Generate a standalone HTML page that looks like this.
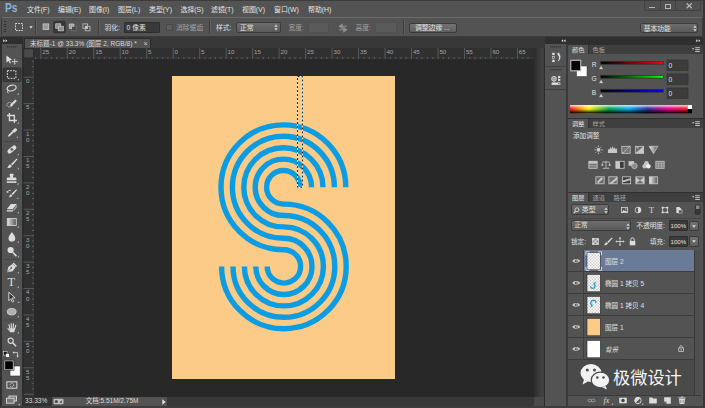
<!DOCTYPE html>
<html lang="zh-CN">
<head>
<meta charset="utf-8">
<title>Photoshop</title>
<style>
*{box-sizing:border-box;margin:0;padding:0}
html,body{width:705px;height:408px;overflow:hidden;background:#535353}
body{font-family:"Liberation Sans","Noto Sans CJK SC",sans-serif;font-size:6.6px;color:#e0e0e0;position:relative;line-height:1}
.a{position:absolute}
.t{position:absolute;white-space:nowrap;line-height:10px;height:10px}
#menubar{left:0;top:0;width:705px;height:17px;background:#535353}
#optbar{left:1px;top:17px;width:702px;height:20px;background:#535353;border:1px solid #3b3b3b;border-top-color:#6a6a6a;border-radius:2px}
#tabbar{left:23px;top:37px;width:522px;height:11px;background:#383838}
#canvas{left:34px;top:59px;width:500px;height:338px;background:#282828}
#hruler{left:23px;top:48px;width:511px;height:11px;background:#424242}
#vruler{left:23px;top:59px;width:11px;height:338px;background:#424242}
#toolbar{left:0;top:37px;width:23.5px;height:371px;background:#2e2e2e}
#toolbody{left:1.5px;top:43.5px;width:20.5px;height:362.5px;background:#535353}
#status{left:23px;top:396.5px;width:511px;height:9.5px;background:#383838}
#vscroll{left:534px;top:48px;width:11px;height:349px;background:linear-gradient(90deg,#2c2c2c,#454545 85%,#2c2c2c 90%)}
#dockhead{left:545px;top:37px;width:160px;height:7px;background:#2f2f2f}
#iconcol{left:545px;top:44px;width:22.5px;height:362px;background:#535353;border-right:2px solid #3a3a3a}
#panels{left:567.5px;top:44px;width:135.2px;height:362px;background:#535353}
#rightedge{left:702.7px;top:0;width:2.3px;height:408px;background:#363636}
#bottomstrip{left:0;top:405.8px;width:705px;height:2.2px;background:#3c3c3c}

#pslogo{left:5.3px;top:1.3px;font-size:13.4px;font-weight:bold;color:#86b4e4;line-height:14px;height:14px;font-family:"Liberation Sans",sans-serif;transform:scaleX(0.76);transform-origin:0 0}
.mi{top:4.6px;font-size:6.9px;color:#e4e4e4}
#optitems .t{font-size:6.8px;margin-top:0.8px}
#winctl{left:643.5px;top:0;width:57.5px;height:10.500px;background:#505050;border:1px solid #424242;border-top:0;border-radius:0 0 2px 2px}
.wc{top:0;height:10px;border-right:1px solid #3a3a3a}
.wc:last-child{border-right:0}
.grip{width:2px;height:12px;background:repeating-linear-gradient(180deg,#2f2f2f 0,#2f2f2f 1px,transparent 1px,transparent 2.5px)}
.vsep{top:20px;width:1px;height:14px;background:#3f3f3f;box-shadow:1px 0 0 #5e5e5e}
.inp{background:#3a3a3a;border:1px solid #2e2e2e;border-radius:1px}
.inpd{background:#5a5a5a;border:1px solid #505050;border-radius:1px}
.dd{background:linear-gradient(180deg,#6c6c6c,#5a5a5a);border:1px solid #3c3c3c;border-radius:2px}
.btn{background:linear-gradient(180deg,#737373,#5e5e5e);border:1px solid #3a3a3a;border-radius:2px}
.dis{color:#a2a2a2}

#doctab{left:24px;top:38px;width:126.5px;height:10.5px;background:#535353;border:1px solid #2c2c2c;border-bottom:0;border-radius:1px 1px 0 0}

.ptabbar{left:567.500px;width:135.200px;height:10px;background:#3f3f3f;border-top:1px solid #2f2f2f}
.ptab{height:10px;background:#535353;border-right:1px solid #333;border-top:1px solid #333}
.ptd{color:#a4a4a4}
.lrow{left:568px;width:126px;height:22px;background:#535353;border-bottom:1px solid #3c3c3c}
.lsel{background:#6a7b97}
.leye{left:568px;width:16px;height:22px;background:#535353;border-right:1px solid #3e3e3e;border-bottom:1px solid #3c3c3c}
#wm{left:613px;top:365px;font-size:17.200px;line-height:24px;height:24px;color:#f4f4f4;font-family:"Noto Sans CJK SC",sans-serif}
</style>
</head>
<body>
<div class="a" id="menubar">
<div class="t" id="pslogo">Ps</div>
<div class="t mi" style="left:27px">文件(F)</div>
<div class="t mi" style="left:58px">编辑(E)</div>
<div class="t mi" style="left:89px">图像(I)</div>
<div class="t mi" style="left:118px">图层(L)</div>
<div class="t mi" style="left:149px">类型(Y)</div>
<div class="t mi" style="left:180.5px">选择(S)</div>
<div class="t mi" style="left:211px">滤镜(T)</div>
<div class="t mi" style="left:242px">视图(V)</div>
<div class="t mi" style="left:274px">窗口(W)</div>
<div class="t mi" style="left:308px">帮助(H)</div>
<div class="a" id="winctl"><i class="a" style="left:15px;top:0;width:1px;height:10px;background:#444"></i><i class="a" style="left:30.500px;top:0;width:1px;height:10px;background:#444"></i><i class="a" style="left:4.500px;top:6.500px;width:5.800px;height:1.700px;background:#b4b4b4"></i><i class="a" style="left:20.500px;top:4.200px;width:5.800px;height:4.400px;border:1px solid #b4b4b4;border-top-width:1.500px"></i><svg class="a" style="left:41px;top:3.200px" width="6.500" height="5.500" viewBox="0 0 6.500 5.500"><path d="M0.600 0.300L5.900 5.200M5.900 0.300L0.600 5.200" stroke="#b8b8b8" stroke-width="1.300" fill="none"/></svg></div>
</div>
<div class="a" id="optbar"></div>
<div class="a" id="optitems">
<i class="a grip" style="left:4px;top:21px"></i>
<svg class="a" style="left:14px;top:22px" width="20" height="10" viewBox="0 0 20 10"><rect x="1.5" y="1.5" width="7" height="7" fill="none" stroke="#dcdcdc" stroke-width="1" stroke-dasharray="1.6 1.1"/><path d="M15.300 4.300h3.400l-1.700 2.200z" fill="#e4e4e4"/></svg>
<i class="a vsep" style="left:35.200px"></i>
<svg class="a" style="left:40px;top:20px" width="54" height="14" viewBox="0 0 54 14">
<rect x="3.1" y="3.9" width="5.6" height="5.6" fill="#9a9a9a" stroke="#cacaca" stroke-width="0.8"/>
<rect x="13.5" y="1.3" width="11.8" height="11.6" rx="1.5" fill="#363636" stroke="#2e2e2e" stroke-width="0.6"/>
<rect x="15.700" y="3.800" width="5" height="4.500" fill="#8d8d8d" stroke="#c4c4c4" stroke-width="0.800"/><rect x="18.300" y="6.300" width="5" height="4.500" fill="#8d8d8d" stroke="#c4c4c4" stroke-width="0.800"/>
<rect x="31.500" y="6.200" width="4.800" height="4.600" fill="#484848" stroke="#707070" stroke-width="0.800"/><path d="M29.300 4h4.600v2.200h-2.400v2.200h-2.200z" fill="#a0a0a0" stroke="#cccccc" stroke-width="0.800"/>
<rect x="42.900" y="3.900" width="4.700" height="4.500" fill="none" stroke="#bdbdbd" stroke-width="0.800"/><rect x="45.300" y="6.300" width="4.700" height="4.500" fill="none" stroke="#bdbdbd" stroke-width="0.800"/><rect x="45.300" y="6.300" width="2.300" height="2.100" fill="#d0d0d0"/>
</svg>
<i class="a vsep" style="left:97.700px"></i>
<div class="t" style="left:104.5px;top:22px">羽化:</div>
<div class="a inp" style="left:123.5px;top:22px;width:36px;height:11px"></div>
<div class="t" style="left:126.5px;top:22.5px">0 像素</div>
<i class="a" style="left:165.5px;top:23.5px;width:7px;height:7px;background:#5c5c5c;border:1px solid #484848;border-radius:1px"></i>
<div class="t dis" style="left:176px;top:22px">消除锯齿</div>
<i class="a vsep" style="left:209px"></i>
<div class="t" style="left:216px;top:22px">样式:</div>
<div class="a dd" style="left:236px;top:22px;width:44.5px;height:11px"></div>
<div class="t" style="left:240px;top:22.5px">正常</div>
<svg class="a" style="left:274px;top:24px" width="4" height="7" viewBox="0 0 4 7"><path d="M0.3 2.7L2 0.5 3.7 2.7zM0.3 4.3L2 6.5 3.7 4.3z" fill="#d8d8d8"/></svg>
<div class="t dis" style="left:288.5px;top:22px">宽度:</div>
<div class="a inpd" style="left:307.5px;top:22px;width:21.5px;height:11px"></div>
<svg class="a" style="left:337.500px;top:22.500px" width="10" height="10" viewBox="0 0 10 10"><path d="M1 6.800h5.500M5.800 4.800L8.600 6.800 5.800 8.800zM9 3.200h-5.500M4.200 1.200L1.400 3.200 4.200 5.200z" stroke="#8e8e8e" stroke-width="1.100" fill="#8e8e8e"/></svg>
<div class="t dis" style="left:355.5px;top:22px">高度:</div>
<div class="a inpd" style="left:375px;top:22px;width:22px;height:11px"></div>
<i class="a vsep" style="left:402.5px"></i>
<div class="a btn" style="left:409px;top:22.5px;width:47.5px;height:10px"></div>
<div class="t" style="left:415px;top:22.5px">调整边缘 ...</div>
<div class="a dd" style="left:639.800px;top:22.700px;width:58.500px;height:10.500px"></div>
<div class="t" style="left:643.700px;top:23.200px">基本功能</div>
<svg class="a" style="left:692.500px;top:24.700px" width="4" height="7" viewBox="0 0 4 7"><path d="M0.3 2.7L2 0.5 3.7 2.7zM0.3 4.3L2 6.5 3.7 4.3z" fill="#d8d8d8"/></svg>
</div>
<div class="a" id="toolbar"></div>
<div class="a" id="toolbody"></div>
<svg class="a" id="tools" style="left:0;top:37px" width="23" height="371" viewBox="0 37 23 371">
<rect x="0" y="37" width="23" height="7" fill="#2e2e2e"/>
<path d="M3.2 39.3l1.8 1.5-1.8 1.5zM5.6 39.3l1.8 1.5-1.8 1.5z" fill="#e0e0e0"/>
<path d="M7 46.800h10" stroke="#383838" stroke-width="1.500" stroke-dasharray="1.300 0.700"/>
<g transform="translate(11.9 60)"><path d="M-5.5 -4.5L0.2 -0.2-2.2 0.3-0.9 3-2 3.5-3.3 0.9-5.5 2.6z" fill="#dcdcdc"/><path d="M2.8 -0.600v4.400M0.600 1.600h4.400" stroke="#dcdcdc" stroke-width="0.800"/><path d="M2.800 -1.600l1 1.200h-2zM2.800 4.800l1-1.200h-2zM-0.400 1.600l1.200-1v2zM6 1.600l-1.200-1v2z" fill="#dcdcdc"/></g>
<rect x="3" y="68" width="18" height="13.5" rx="1.5" fill="#3a3a3a" stroke="#2c2c2c" stroke-width="0.8"/>
<g transform="translate(11.9 74.5)"><rect x="-4.5" y="-3.8" width="8.5" height="7.6" fill="none" stroke="#dcdcdc" stroke-width="1" stroke-dasharray="1.7 1.1"/><path d="M7 4v1.700h-1.700z" fill="#c0c0c0"/></g>
<g transform="translate(11.9 89)"><ellipse cx="0" cy="-1" rx="4.6" ry="2.8" fill="none" stroke="#dcdcdc" stroke-width="1.2" transform="rotate(-15)"/><path d="M-3 1.2c-1.5 0.5-1.8 2 -0.6 3.2" fill="none" stroke="#dcdcdc" stroke-width="1"/><path d="M7 4v1.700h-1.700z" fill="#c0c0c0"/></g>
<g transform="translate(11.9 103.5)"><ellipse cx="-2.2" cy="1.2" rx="2.8" ry="2.2" fill="none" stroke="#dcdcdc" stroke-width="0.9" stroke-dasharray="1.2 0.8"/><path d="M-2 1.5L3.5 -4 5 -2.5-0.5 3z" fill="#dcdcdc"/><path d="M7 4v1.700h-1.700z" fill="#c0c0c0"/></g>
<g transform="translate(11.9 118)"><path d="M-2.5 -5v7.5h7.5M-5 -2.5h7.5v7.5" fill="none" stroke="#dcdcdc" stroke-width="1.3"/><path d="M7 4v1.700h-1.700z" fill="#c0c0c0"/></g>
<g transform="translate(11.9 132.9)"><g transform="scale(0.86)"><path d="M-4.5 4.5l0.5-2L1 -2.5 2.5 -1-2.5 4z" fill="#dcdcdc"/><path d="M0.8 -3.3L3.3 -0.8M1.5 -2.5l2-2c1-0.8 2.3 0.4 1.5 1.5l-2 2" stroke="#dcdcdc" stroke-width="1.3" fill="#dcdcdc"/><path d="M7 4v1.700h-1.700z" fill="#c0c0c0"/></g></g>
<rect x="4" y="141.2" width="16" height="0.8" fill="#444"/>
<g transform="translate(11.9 149.5)"><rect x="-5.2" y="-2.2" width="10.4" height="4.4" rx="2.2" fill="#dcdcdc" transform="rotate(-40)"/><rect x="-1.3" y="-1.3" width="2.6" height="2.6" fill="#666" transform="rotate(-40)"/><path d="M7 4v1.700h-1.700z" fill="#c0c0c0"/></g>
<g transform="translate(11.9 163.5)"><path d="M4.8 -5L5.6 -4.2 0.5 1.8-0.9 0.4z" fill="#dcdcdc"/><path d="M-1.5 1L-0.1 2.4c-0.8 1.8-2.6 2.4-4.6 2 1.2-0.7 1.3-3.5 3.2-3.4z" fill="#dcdcdc"/><path d="M7 4v1.700h-1.700z" fill="#c0c0c0"/></g>
<g transform="translate(11.6 178.8)"><path d="M-1.2 -5h2.4c0.8 0 1 0.8 0.6 1.6l-0.6 2.2h2.6c0.7 0 1 0.4 1 1v1.6h-9.6v-1.6c0-0.6 0.3-1 1-1h2.6l-0.6-2.2c-0.4-0.8-0.2-1.6 0.6-1.6z" fill="#dcdcdc"/><rect x="-4.8" y="2.5" width="9.6" height="1.6" fill="#dcdcdc"/><path d="M7 4v1.700h-1.700z" fill="#c0c0c0"/></g>
<g transform="translate(11.9 193.8) scale(0.92)"><path d="M4.8 -5L5.6 -4.2 1 1.2-0.3 -0.1z" fill="#dcdcdc"/><path d="M-1 0.5L0.4 1.9c-0.6 1.4-2.2 2-3.8 1.7 1-0.6 1-2.9 2.4-3.1z" fill="#dcdcdc"/><path d="M-1 -3.8a3.6 3.6 0 0 0 -4 2" fill="none" stroke="#dcdcdc" stroke-width="1"/><path d="M-5.8 -3.2l0.4 2.4 2.1-1z" fill="#dcdcdc"/><path d="M7 4v1.700h-1.700z" fill="#c0c0c0"/></g>
<g transform="translate(11.9 207.5)"><path d="M-5 1.5L-1 -3.5h6L1 1.5z" fill="#dcdcdc"/><path d="M-5 2.2h6v2h-6z" fill="#bdbdbd"/><path d="M1.6 1.9L5.2 -2.8v2L1.6 3.9z" fill="#a8a8a8"/><path d="M7 4v1.700h-1.700z" fill="#c0c0c0"/></g>
<defs><linearGradient id="gr1" x1="0" x2="1"><stop offset="0" stop-color="#e4e4e4"/><stop offset="1" stop-color="#555"/></linearGradient></defs>
<g transform="translate(11.9 222)"><rect x="-4.600" y="-3.500" width="9" height="7" fill="url(#gr1)" stroke="#d0d0d0" stroke-width="0.900"/><path d="M7 4v1.700h-1.700z" fill="#c0c0c0"/></g>
<g transform="translate(11.9 237)"><path d="M0 -5c1.2 2.2 3.4 4 3.4 6.2a3.4 3.4 0 0 1-6.8 0c0-2.2 2.2-4 3.4-6.2z" fill="#dcdcdc"/><path d="M7 4v1.700h-1.700z" fill="#c0c0c0"/></g>
<g transform="translate(11.9 251.5)"><circle cx="-1.3" cy="-1.5" r="3.1" fill="#dcdcdc"/><path d="M0.8 0.8L4.5 4.6" stroke="#dcdcdc" stroke-width="1.6"/><path d="M7 4v1.700h-1.700z" fill="#c0c0c0"/></g>
<rect x="4" y="259" width="15" height="0.8" fill="#444"/>
<g transform="translate(11.9 267.5)"><path d="M-4.8 4.8L-3.6 -0.6 0.6 -3.6 3.8 -0.4 0.8 3.8z" fill="#dcdcdc"/><path d="M1.2 -4.4L4.6 -1" stroke="#dcdcdc" stroke-width="1.5"/><circle cx="-0.6" cy="0.4" r="0.9" fill="#555"/><path d="M-4.6 4.6L-0.9 0.8" stroke="#555" stroke-width="0.7"/><path d="M7 4v1.700h-1.700z" fill="#c0c0c0"/></g>
<text x="11.3" y="286.3" font-family="Liberation Serif, serif" font-size="12.5" fill="#dcdcdc" text-anchor="middle">T</text>
<g transform="translate(11.9 282)"><path d="M7 4v1.700h-1.700z" fill="#c0c0c0"/></g>
<g transform="translate(12.3 297.2)"><path d="M-3.5 -5L2.8 0.6-0.2 0.9 1.4 4.2 0 4.9-1.6 1.6-3.5 3.6z" fill="#3a3a3a" stroke="#dcdcdc" stroke-width="0.9"/><path d="M7 4v1.700h-1.700z" fill="#c0c0c0"/></g>
<g transform="translate(11.9 311.5)"><ellipse cx="-0.200" cy="0.200" rx="4.400" ry="3.200" fill="#b0b0b0" stroke="#d4d4d4" stroke-width="0.900"/><path d="M7 4v1.700h-1.700z" fill="#c0c0c0"/></g>
<rect x="4" y="319.5" width="15" height="0.8" fill="#444"/>
<g transform="translate(11.9 327.7)"><path d="M-1.800 4.600c-0.800-1.300-2.200-2.500-2.900-3.700 0.500-0.800 1.400-0.400 2.100 0.500z" fill="#d8d8d8"/><path d="M-2 4.600h4.200c0.600-1 0.900-1.800 0.900-3V0.500h-5.300v1.500z" fill="#d8d8d8"/><path d="M-2.100 1L-2.900-3M-0.500 0.500L-0.700-4.200M1.200 0.500L1.600-3.900M2.800 1.200L3.800-2.400" stroke="#d8d8d8" stroke-width="1.150" stroke-linecap="round" fill="none"/><path d="M7 4v1.700h-1.700z" fill="#c0c0c0"/></g>
<g transform="translate(11.9 342)"><circle cx="-1.200" cy="-1.300" r="2.600" fill="none" stroke="#d8d8d8" stroke-width="1.200"/><path d="M0.800 0.800L4.200 4.300" stroke="#d8d8d8" stroke-width="1.600"/></g>
<rect x="3.5" y="351.5" width="3.6" height="3.6" fill="#111" stroke="#dcdcdc" stroke-width="0.6"/><rect x="5.6" y="353.6" width="3.6" height="3.6" fill="#fff" stroke="#222" stroke-width="0.4"/>
<path d="M14 352.6h3.6v3.6" fill="none" stroke="#dcdcdc" stroke-width="0.8"/><path d="M14.2 351.3l-1.6 1.3 1.6 1.3zM16.3 355.8l1.3 1.6 1.3-1.6z" fill="#dcdcdc"/>
<rect x="10" y="366" width="10.200" height="10" fill="#fff" stroke="#2a2a2a" stroke-width="0.600"/><rect x="4.700" y="360.800" width="8.600" height="9" fill="#000" stroke="#c4c4c4" stroke-width="0.900"/><rect x="3.900" y="360" width="10.200" height="10.600" fill="none" stroke="#2a2a2a" stroke-width="0.500"/>
<g transform="translate(11.9 385)"><rect x="-5" y="-3.2" width="10" height="6.4" fill="none" stroke="#dcdcdc" stroke-width="1"/><circle cx="0" cy="0" r="1.9" fill="none" stroke="#dcdcdc" stroke-width="1" stroke-dasharray="1 0.7"/></g>
<g transform="translate(11.5 399.8)"><rect x="-2.5" y="-3.8" width="7.5" height="5" fill="#777" stroke="#dcdcdc" stroke-width="0.9"/><rect x="-5" y="-1.6" width="7.5" height="5" fill="#777" stroke="#dcdcdc" stroke-width="0.9"/><path d="M8.3 3.6v1.8h-1.8z" fill="#c8c8c8"/></g>
</svg>
<div class="a" id="tabbar"></div>
<div class="a" id="doctab"></div>
<div class="t" style="left:30px;top:38.700px;font-size:6.55px;color:#dadada">未标题-1 @ 33.3% (图层 2, RGB/8) *</div>
<div class="t" style="left:143.500px;top:38.500px;font-size:7px;color:#d0d0d0">×</div>
<div class="a" id="canvas"></div>
<svg class="a" id="doc" style="left:0;top:0" width="705" height="408" viewBox="0 0 705 408">
<rect x="172" y="76" width="223" height="303" fill="#fccb87"/>
<g fill="none" stroke="#0a9de4" stroke-width="5.4">
<path d="M300.20 187.30A16.80 16.80 0 1 0 283.40 204.10L283.90 204.10A62.30 62.30 0 1 1 221.60 266.40"/>
<path d="M311.60 187.30A28.20 28.20 0 1 0 283.40 215.50L283.90 215.50A50.90 50.90 0 1 1 233.00 266.40"/>
<path d="M323.00 187.30A39.60 39.60 0 1 0 283.40 226.90L283.90 226.90A39.50 39.50 0 1 1 244.40 266.40"/>
<path d="M334.40 187.30A51.00 51.00 0 1 0 283.40 238.30L283.90 238.30A28.10 28.10 0 1 1 255.80 266.40"/>
<path d="M345.80 187.30A62.40 62.40 0 1 0 283.40 249.70L283.90 249.70A16.70 16.70 0 1 1 267.20 266.40"/>
</g>
<rect x="297.5" y="76.5" width="5" height="110.8" fill="none" stroke="#fff" stroke-width="1"/>
<rect x="297.5" y="76.5" width="5" height="110.8" fill="none" stroke="#222" stroke-width="1" stroke-dasharray="2 2"/>
</svg>
<svg class="a" id="hrul" style="left:0;top:48px" width="534" height="11" viewBox="0 0 534 11">
<rect x="23" y="0" width="511" height="11" fill="#303030"/><rect x="23" y="9.600" width="511" height="1" fill="#3b3b3b"/>
<rect x="23" y="0" width="11" height="11" fill="#2c2c2c"/><rect x="24.300" y="1.200" width="8.700" height="8.300" fill="#4a4a4a"/>
<g stroke="#6c6c6c" stroke-width="0.7">
<path d="M35.50 9V11M40.80 0V11M46.10 9V11M51.39 9V11M56.69 9V11M61.98 9V11M67.28 0V11M72.58 9V11M77.87 9V11M83.17 9V11M88.46 9V11M93.76 0V11M99.06 9V11M104.35 9V11M109.65 9V11M114.94 9V11M120.24 0V11M125.54 9V11M130.83 9V11M136.13 9V11M141.42 9V11M146.72 0V11M152.02 9V11M157.31 9V11M162.61 9V11M167.90 9V11M173.20 0V11M178.50 9V11M183.79 9V11M189.09 9V11M194.38 9V11M199.68 0V11M204.98 9V11M210.27 9V11M215.57 9V11M220.86 9V11M226.16 0V11M231.46 9V11M236.75 9V11M242.05 9V11M247.34 9V11M252.64 0V11M257.94 9V11M263.23 9V11M268.53 9V11M273.82 9V11M279.12 0V11M284.42 9V11M289.71 9V11M295.01 9V11M300.30 9V11M305.60 0V11M310.90 9V11M316.19 9V11M321.49 9V11M326.78 9V11M332.08 0V11M337.38 9V11M342.67 9V11M347.97 9V11M353.26 9V11M358.56 0V11M363.86 9V11M369.15 9V11M374.45 9V11M379.74 9V11M385.04 0V11M390.34 9V11M395.63 9V11M400.93 9V11M406.22 9V11M411.52 0V11M416.82 9V11M422.11 9V11M427.41 9V11M432.70 9V11M438.00 0V11M443.30 9V11M448.59 9V11M453.89 9V11M459.18 9V11M464.48 0V11M469.78 9V11M475.07 9V11M480.37 9V11M485.66 9V11M490.96 0V11M496.26 9V11M501.55 9V11M506.85 9V11M512.14 9V11M517.44 0V11M522.74 9V11M528.03 9V11"/>
</g>
<g font-size="6.2" fill="#a4a4a4" font-family="Liberation Sans, sans-serif">
<text x="42.2" y="6.1">25</text><text x="68.7" y="6.1">20</text><text x="95.2" y="6.1">15</text><text x="121.6" y="6.1">10</text><text x="148.1" y="6.1">5</text><text x="174.6" y="6.1">0</text><text x="201.1" y="6.1">5</text><text x="227.6" y="6.1">10</text><text x="254.0" y="6.1">15</text><text x="280.5" y="6.1">20</text><text x="307.0" y="6.1">25</text><text x="333.5" y="6.1">30</text><text x="360.0" y="6.1">35</text><text x="386.4" y="6.1">40</text><text x="412.9" y="6.1">45</text><text x="439.4" y="6.1">50</text><text x="465.9" y="6.1">55</text><text x="492.4" y="6.1">60</text><text x="518.8" y="6.1">65</text>
</g>
</svg>
<svg class="a" id="vrul" style="left:23px;top:59px" width="11" height="338" viewBox="23 59 11 338">
<rect x="23" y="59" width="11" height="338" fill="#303030"/><rect x="23" y="59" width="1" height="338" fill="#2a2a2a"/><rect x="32.700" y="59" width="1" height="338" fill="#3b3b3b"/>
<g stroke="#6c6c6c" stroke-width="0.7">
<path d="M32 61.35H34M32 66.63H34M32 71.92H34M23.5 77.20H34M32 82.48H34M32 87.77H34M32 93.05H34M32 98.34H34M23.5 103.62H34M32 108.90H34M32 114.19H34M32 119.47H34M32 124.76H34M23.5 130.04H34M32 135.32H34M32 140.61H34M32 145.89H34M32 151.18H34M23.5 156.46H34M32 161.74H34M32 167.03H34M32 172.31H34M32 177.60H34M23.5 182.88H34M32 188.16H34M32 193.45H34M32 198.73H34M32 204.02H34M23.5 209.30H34M32 214.58H34M32 219.87H34M32 225.15H34M32 230.44H34M23.5 235.72H34M32 241.00H34M32 246.29H34M32 251.57H34M32 256.86H34M23.5 262.14H34M32 267.42H34M32 272.71H34M32 277.99H34M32 283.28H34M23.5 288.56H34M32 293.84H34M32 299.13H34M32 304.41H34M32 309.70H34M23.5 314.98H34M32 320.26H34M32 325.55H34M32 330.83H34M32 336.12H34M23.5 341.40H34M32 346.68H34M32 351.97H34M32 357.25H34M32 362.54H34M23.5 367.82H34M32 373.10H34M32 378.39H34M32 383.67H34M32 388.96H34M23.5 394.24H34"/>
</g>
<g font-size="6.2" fill="#a4a4a4" font-family="Liberation Sans, sans-serif">
<text x="26" y="83.0">0</text><text x="26" y="109.4">5</text><text x="26" y="135.8">1</text><text x="26" y="141.9">0</text><text x="26" y="162.3">1</text><text x="26" y="168.4">5</text><text x="26" y="188.7">2</text><text x="26" y="194.8">0</text><text x="26" y="215.1">2</text><text x="26" y="221.2">5</text><text x="26" y="241.5">3</text><text x="26" y="247.6">0</text><text x="26" y="267.9">3</text><text x="26" y="274.0">5</text><text x="26" y="294.4">4</text><text x="26" y="300.5">0</text><text x="26" y="320.8">4</text><text x="26" y="326.9">5</text><text x="26" y="347.2">5</text><text x="26" y="353.3">0</text><text x="26" y="373.6">5</text><text x="26" y="379.7">5</text>
</g></svg>
<div class="a" id="status"></div>
<div class="a" style="left:23px;top:396.700px;width:28px;height:9.300px;background:#323232"></div>
<div class="a" style="left:51px;top:396.700px;width:116px;height:9.300px;background:#535353;border-left:1px solid #2e2e2e"></div>
<div class="t" style="left:25px;top:396px;font-size:6.6px;color:#dadada">33.33%</div>
<svg class="a" style="left:52.5px;top:398px" width="11" height="7" viewBox="0 0 11 7"><rect x="0.500" y="0.800" width="10" height="5.400" rx="1" fill="#c0c0c0"/><circle cx="3.300" cy="3.500" r="1.600" fill="#484848"/><path d="M6.300 4.800l2.600-2.600v2.600z" fill="#484848"/></svg>
<div class="t" style="left:85.700px;top:396.200px;font-size:6.5px;color:#dcdcdc">文档:5.51M/2.75M</div>
<svg class="a" style="left:161.800px;top:398.500px" width="4" height="6" viewBox="0 0 4 6"><path d="M0.3 0.3L3.7 3 0.3 5.7z" fill="#e0e0e0"/></svg>
<div class="a" style="left:534px;top:396.800px;width:9.700px;height:9.200px;background:#4a4a4a"></div><div class="a" style="left:543.700px;top:396.500px;width:1.300px;height:9.500px;background:#2c2c2c"></div>
<div class="a" id="vscroll"></div>
<div class="a" id="dockhead"></div>
<div class="a" id="iconcol"></div>
<div class="a" id="panels"></div>
<svg class="a" style="left:545px;top:37px" width="160" height="7" viewBox="545 37 160 7"><path d="M563.2 39.3l-1.8 1.5 1.8 1.5zM565.6 39.3l-1.8 1.5 1.8 1.5z" fill="#d8d8d8"/><path d="M696.2 39.3l1.8 1.5-1.8 1.5zM698.6 39.3l1.8 1.5-1.8 1.5z" fill="#d8d8d8"/></svg>
<svg class="a" style="left:545px;top:44px" width="22" height="60" viewBox="545 44 22 60">
<path d="M550 46.800h11" stroke="#383838" stroke-width="1.500" stroke-dasharray="1.300 0.700"/>
<g fill="#dcdcdc"><rect x="552.200" y="52.800" width="2.500" height="2.300"/><rect x="552.500" y="56.600" width="1.900" height="1.900" fill="none" stroke="#dcdcdc" stroke-width="0.600"/><rect x="552.200" y="59.800" width="2.500" height="2.300"/><path d="M558.400 53.600c2.600 1.200 2.800 4.800 0.300 7.600l-0.700-0.400c1.500-2.200 1.400-4.600-0.400-5.800z"/><path d="M556.600 53.800l2.800-1.200-0.300 2.700z"/></g>
<rect x="545" y="66" width="22" height="0.8" fill="#3c3c3c"/>
<path d="M550 69.800h11" stroke="#383838" stroke-width="1.500" stroke-dasharray="1.300 0.700"/>
<g fill="#dcdcdc"><path d="M551.800 77.400l2.200-1.200 2.200 1.200v2.800l-2.200 1.200-2.200-1.200z" fill="#8a8a8a" stroke="#dcdcdc" stroke-width="0.800"/><path d="M551.800 77.400l2.200 1.200 2.200-1.200M554 78.600v2.800" fill="none" stroke="#dcdcdc" stroke-width="0.500"/><rect x="558" y="76" width="2.300" height="2.100"/><rect x="558" y="78.800" width="2.300" height="2.100"/><rect x="551.600" y="82.400" width="8.700" height="2.500"/><rect x="558.300" y="83.100" width="1.200" height="1.100" fill="#444"/></g>
<rect x="545" y="89" width="22" height="0.8" fill="#3c3c3c"/>
</svg>
<div class="a ptabbar" style="top:44px"></div>
<div class="a ptab" style="left:567.5px;top:44px;width:21px"></div>
<div class="t" style="left:572px;top:44.5px;font-size:6.2px">颜色</div>
<div class="t ptd" style="left:592.5px;top:44.5px;font-size:6.2px">色板</div>
<svg class="a" style="left:692px;top:47px" width="8" height="6" viewBox="0 0 8 6"><path d="M0 1.2h2.4l-1.2 1.6z" fill="#d0d0d0"/><path d="M3.2 0.7h4.6M3.2 2.6h4.6M3.2 4.5h4.6" stroke="#d0d0d0" stroke-width="0.9"/></svg>
<svg class="a" style="left:567px;top:54px" width="134" height="64" viewBox="567 54 134 64">
<defs>
<linearGradient id="gR" x1="0" x2="1"><stop offset="0" stop-color="#000"/><stop offset="1" stop-color="#f00"/></linearGradient>
<linearGradient id="gG" x1="0" x2="1"><stop offset="0" stop-color="#000"/><stop offset="1" stop-color="#0f0"/></linearGradient>
<linearGradient id="gB" x1="0" x2="1"><stop offset="0" stop-color="#000"/><stop offset="1" stop-color="#00f"/></linearGradient>
<linearGradient id="gS" x1="0" x2="1"><stop offset="0" stop-color="#ee1c24"/><stop offset="0.16" stop-color="#fff200"/><stop offset="0.33" stop-color="#00a651"/><stop offset="0.5" stop-color="#00aeef"/><stop offset="0.66" stop-color="#2e3192"/><stop offset="0.83" stop-color="#ec008c"/><stop offset="1" stop-color="#ee1c24"/></linearGradient>
<linearGradient id="gV" x1="0" y1="0" x2="0" y2="1"><stop offset="0" stop-color="#fff" stop-opacity="0.8"/><stop offset="0.45" stop-color="#fff" stop-opacity="0"/><stop offset="0.5" stop-color="#000" stop-opacity="0"/><stop offset="1" stop-color="#000" stop-opacity="1"/></linearGradient>
</defs>
<rect x="576.5" y="66" width="10.5" height="10.5" fill="#fff" stroke="#333" stroke-width="0.5"/>
<rect x="570.800" y="60.300" width="9.900" height="10.500" fill="#000" stroke="#c0c0c0" stroke-width="1.100"/>

<g font-family="Liberation Sans, sans-serif" font-size="6.6" fill="#e0e0e0"><text x="591.800" y="67.100">R</text><text x="591.600" y="81.100">G</text><text x="591.800" y="95.100">B</text></g>
<rect x="600.7" y="61.3" width="62.6" height="2.9" fill="url(#gR)" stroke="#303030" stroke-width="0.7"/>
<rect x="600.7" y="75.3" width="62.6" height="2.9" fill="url(#gG)" stroke="#303030" stroke-width="0.7"/>
<rect x="600.7" y="89.3" width="62.6" height="2.9" fill="url(#gB)" stroke="#303030" stroke-width="0.7"/>
<g fill="#c8c8c8" stroke="#3a3a3a" stroke-width="0.5"><path d="M601.1 65.3l2.6 4.2h-5.2z"/><path d="M601.1 79.3l2.6 4.2h-5.2z"/><path d="M601.1 93.3l2.6 4.2h-5.2z"/></g>
<g fill="#3c3c3c" stroke="#333" stroke-width="0.7"><rect x="667" y="60" width="21" height="10.400"/><rect x="667" y="74" width="21" height="10.400"/><rect x="667" y="88" width="21" height="10.400"/></g>
<g font-family="Liberation Sans, sans-serif" font-size="6.600" fill="#e0e0e0"><text x="668.500" y="67.700">0</text><text x="668.500" y="81.700">0</text><text x="668.500" y="95.700">0</text></g>
<rect x="570" y="105" width="117.700" height="8.300" fill="url(#gS)"/>
<rect x="570" y="105" width="117.700" height="8.300" fill="url(#gV)"/>
<rect x="687.700" y="105" width="4.300" height="4.100" fill="#fff"/><rect x="687.700" y="109.100" width="4.300" height="4.200" fill="#000"/>
</svg>
<div class="a ptabbar" style="top:118px"></div>
<div class="a ptab" style="left:567.5px;top:118px;width:21px"></div>
<div class="t" style="left:572px;top:118.5px;font-size:6.2px">调整</div>
<div class="t ptd" style="left:592.5px;top:118.5px;font-size:6.2px">样式</div>
<svg class="a" style="left:692px;top:121px" width="8" height="6" viewBox="0 0 8 6"><path d="M0 1.2h2.4l-1.2 1.6z" fill="#d0d0d0"/><path d="M3.2 0.7h4.6M3.2 2.6h4.6M3.2 4.5h4.6" stroke="#d0d0d0" stroke-width="0.9"/></svg>
<div class="t" style="left:573px;top:130.500px">添加调整</div>
<svg class="a" style="left:567px;top:140px" width="134" height="52" viewBox="567 140 134 52">
<defs><linearGradient id="ga" x1="0" x2="1"><stop offset="0" stop-color="#eee"/><stop offset="1" stop-color="#555"/></linearGradient></defs>
<g transform="translate(598.5 149.8) scale(0.92)"><circle r="2.100" fill="#c8c8c8"/><path d="M0-4.600V-3M0 4.600V3M-4.600 0H-3M4.600 0H3M-3.200-3.200L-2.200-2.200M3.200 3.200L2.200 2.200M-3.200 3.200L-2.200 2.200M3.200-3.200L2.200-2.200" stroke="#c8c8c8" stroke-width="0.9"/></g>
<g transform="translate(612.5 149.8) scale(0.92)"><path d="M-5 3.500V1l1-2.500 1 1.500 1-3.500 1 3 1-4 1 3.500 1-2 1 2.500 1-1.500 1 2V3.500z" fill="#c8c8c8"/></g>
<g transform="translate(626 149.8) scale(0.92)"><rect x="-4.500" y="-3.800" width="9" height="7.600" fill="#6a6a6a" stroke="#c8c8c8" stroke-width="0.9"/><path d="M-4.500 3.800C-1 3.500 1-3 4.500-3.800" stroke="#c8c8c8" stroke-width="0.9" fill="none"/><path d="M-4.500-1.200h9M-4.500 1.300h9M-1.500-3.800v7.600M1.500-3.800v7.600" stroke="#999" stroke-width="0.400"/></g>
<g transform="translate(639.5 149.8) scale(0.92)"><rect x="-4.500" y="-3.800" width="9" height="7.600" fill="#6a6a6a" stroke="#c8c8c8" stroke-width="0.9"/><path d="M-4.500 3.800L4.500-3.800V3.800z" fill="#c8c8c8"/><path d="M-3-2.300h2M-2-3.300v2M1.500 2.300h2" stroke="#c8c8c8" stroke-width="0.700"/></g>
<g transform="translate(653.5 149.8) scale(0.92)"><path d="M-4.800-3.800h9.600L0 4.200z" fill="url(#ga)" stroke="#c8c8c8" stroke-width="0.800"/></g>
<g transform="translate(593 164.8) scale(0.92)"><rect x="-4.500" y="-3.800" width="9" height="7.600" fill="#777" stroke="#c8c8c8" stroke-width="0.9"/><rect x="-4.500" y="-3.800" width="9" height="2.500" fill="#c8c8c8"/><path d="M-4.500 1.200h9" stroke="#c8c8c8" stroke-width="0.600"/></g>
<g transform="translate(606 164.8) scale(0.92)"><path d="M0-4.200V3.500M-3.500 3.800h7M-4-3h8" stroke="#c8c8c8" stroke-width="0.900" fill="none"/><path d="M-5.300 1l1.300-3.500 1.300 3.500zM2.700 1l1.300-3.500 1.300 3.500z" fill="#c8c8c8"/></g>
<g transform="translate(620 164.8) scale(0.92)"><rect x="-4.500" y="-3.800" width="9" height="7.600" fill="#3c3c3c" stroke="#c8c8c8" stroke-width="0.9"/><rect x="-4.500" y="-3.800" width="4.500" height="7.600" fill="#c8c8c8"/></g>
<g transform="translate(633 164.8) scale(0.92)"><rect x="-4.800" y="-4" width="6" height="5" fill="#c8c8c8"/><circle cx="1.500" cy="1.200" r="3" fill="#888" stroke="#c8c8c8" stroke-width="0.800"/></g>
<g transform="translate(646.5 164.8) scale(0.92)"><circle cx="0" cy="-1.600" r="2.500" fill="#c8c8c8"/><circle cx="-2" cy="1.600" r="2.500" fill="#c4c4c4"/><circle cx="2" cy="1.600" r="2.500" fill="#eee"/></g>
<g transform="translate(660 164.8) scale(0.92)"><rect x="-4.500" y="-3.800" width="9" height="7.600" fill="#777" stroke="#c8c8c8" stroke-width="0.9"/><path d="M-4.500-1.200h9M-4.500 1.300h9M-1.500-3.800v7.600M1.500-3.800v7.600" stroke="#c8c8c8" stroke-width="0.600"/></g>
<g transform="translate(600 180.3) scale(0.92)"><rect x="-4.500" y="-3.800" width="9" height="7.600" fill="#6a6a6a" stroke="#c8c8c8" stroke-width="0.9"/><path d="M-2.500 2.500L2.500-2.500" stroke="#c8c8c8" stroke-width="2.200"/></g>
<g transform="translate(613 180.3) scale(0.92)"><rect x="-4.500" y="-3.800" width="9" height="7.600" fill="#6a6a6a" stroke="#c8c8c8" stroke-width="0.9"/><path d="M-4.500 3.800L4.500-3.800v3L-1 3.800z" fill="#c8c8c8"/></g>
<g transform="translate(626.5 180.3) scale(0.92)"><rect x="-4.500" y="-3.800" width="9" height="7.600" fill="#3c3c3c" stroke="#c8c8c8" stroke-width="0.9"/><path d="M-4.500 1C-1 1 1-1 4.500-1" stroke="#c8c8c8" stroke-width="2" fill="none"/></g>
<g transform="translate(640 180.3) scale(0.92)"><rect x="-4.500" y="-3.800" width="9" height="7.600" fill="#6a6a6a" stroke="#c8c8c8" stroke-width="0.9"/><path d="M-4.500-3.800L0 0-4.500 3.800zM4.500-3.800L0 0 4.500 3.800z" fill="#c8c8c8"/></g>
<g transform="translate(653.5 180.3) scale(0.92)"><rect x="-4.500" y="-3.800" width="9" height="7.600" fill="url(#ga)" stroke="#c8c8c8" stroke-width="0.900"/></g>
</svg>
<div class="a ptabbar" style="top:192px"></div>
<div class="a ptab" style="left:567.5px;top:192px;width:21px"></div>
<div class="t" style="left:572px;top:192.5px;font-size:6.2px">图层</div>
<div class="t ptd" style="left:592.5px;top:192.5px;font-size:6.2px">通道</div>
<div class="t ptd" style="left:613.5px;top:192.5px;font-size:6.2px">路径</div>
<svg class="a" style="left:692px;top:195px" width="8" height="6" viewBox="0 0 8 6"><path d="M0 1.2h2.4l-1.2 1.6z" fill="#d0d0d0"/><path d="M3.2 0.7h4.6M3.2 2.6h4.6M3.2 4.5h4.6" stroke="#d0d0d0" stroke-width="0.9"/></svg>
<div class="a dd" style="left:570.500px;top:204.300px;width:38.500px;height:10.700px"></div>
<svg class="a" style="left:573px;top:206.500px" width="7" height="7" viewBox="0 0 7 7"><circle cx="4" cy="2.800" r="2" fill="none" stroke="#dcdcdc" stroke-width="0.900"/><path d="M2.600 4.200L0.700 6.300" stroke="#dcdcdc" stroke-width="1.100"/></svg>
<div class="t" style="left:581.800px;top:204.700px;font-size:6.9px">类型</div>
<svg class="a" style="left:603.500px;top:206.500px" width="4" height="7" viewBox="0 0 4 7"><path d="M0.300 2.700L2 0.500 3.700 2.700zM0.300 4.300L2 6.500 3.700 4.300z" fill="#d8d8d8"/></svg>
<svg class="a" style="left:618px;top:203px" width="84" height="14" viewBox="618 203 84 14">
<g transform="translate(624.5 210) scale(0.88)"><rect x="-3.500" y="-3" width="7" height="6" fill="none" stroke="#dcdcdc" stroke-width="0.900"/><path d="M-3 2.500l2-2.500 1.500 1.500 1-1 1.500 2z" fill="#dcdcdc"/><circle cx="1.500" cy="-1.200" r="0.700" fill="#dcdcdc"/></g>
<g transform="translate(638 210) scale(0.88)"><circle r="3.300" fill="none" stroke="#dcdcdc" stroke-width="0.900"/><path d="M0-3.300a3.300 3.300 0 0 1 0 6.600z" fill="#dcdcdc"/></g>
<text x="651.500" y="213.200" font-family="Liberation Serif, serif" font-size="9" fill="#d4d4d4" text-anchor="middle">T</text>
<g transform="translate(665 210) scale(0.88)"><rect x="-2.600" y="-2.600" width="5.200" height="5.200" fill="none" stroke="#dcdcdc" stroke-width="0.900"/><path d="M-3.800-3.800h2.200v2.200h-2.200zM1.600-3.800h2.200v2.200h-2.200zM-3.800 1.600h2.200v2.200h-2.200zM1.600 1.600h2.200v2.200h-2.200z" fill="#dcdcdc"/></g>
<g transform="translate(679 210) scale(0.88)"><path d="M-3-3.500h3.500l2 2V3.500h-5.500z" fill="#dcdcdc"/><rect x="-0.500" y="0" width="4" height="3.500" fill="#555" stroke="#dcdcdc" stroke-width="0.600"/></g>
<rect x="695.200" y="205" width="5" height="9.300" rx="1.200" fill="#363636" stroke="#2c2c2c" stroke-width="0.600"/><rect x="695.900" y="205.600" width="3.600" height="3.400" rx="0.500" fill="#8a8a8a"/>
</svg>
<div class="a" style="left:567px;top:218px;width:134px;height:1px;background:#464646"></div>
<div class="a dd" style="left:570.500px;top:219.900px;width:60.700px;height:10.700px"></div>
<div class="t" style="left:574.500px;top:220.300px">正常</div>
<svg class="a" style="left:625.500px;top:222.500px" width="4" height="7" viewBox="0 0 4 7"><path d="M0.300 2.700L2 0.500 3.700 2.700zM0.300 4.300L2 6.500 3.700 4.300z" fill="#d8d8d8"/></svg>
<div class="t" style="left:636.300px;top:220.500px;font-size:6.7px">不透明度:</div>
<div class="a inp" style="left:668.500px;top:220.200px;width:19.700px;height:10.400px"></div><div class="t" style="left:670.500px;top:220.700px;font-size:6.1px">100%</div>
<div class="a btn" style="left:688.500px;top:220.500px;width:10.500px;height:10.500px"></div><svg class="a" style="left:692px;top:224.500px" width="4" height="3" viewBox="0 0 4 3"><path d="M0.200 0.300h3.600L2 2.700z" fill="#e0e0e0"/></svg>
<div class="t" style="left:571px;top:236.500px">锁定:</div>
<svg class="a" style="left:588px;top:235px" width="52" height="13" viewBox="588 235 52 13">
<g transform="translate(595.5 241.5)"><rect x="-3" y="-3" width="6" height="6" fill="#888" stroke="#dcdcdc" stroke-width="0.700"/><path d="M-3-3h2v2h-2zM1-3h2v2h-2zM-1-1h2v2h-2zM-3 1h2v2h-2zM1 1h2v2h-2z" fill="#dcdcdc"/></g>
<g transform="translate(608 241.5)"><path d="M3.800-4L4.600-3.200 0.300 1.600-0.900 0.400z" fill="#dcdcdc"/><path d="M-1.300 0.800L-0.100 2c-0.700 1.500-2.300 2-3.900 1.700 1-0.600 1.100-2.900 2.700-2.900z" fill="#dcdcdc"/></g>
<g transform="translate(620 241.5)"><path d="M0-3.800V3.800M-3.800 0H3.800" stroke="#dcdcdc" stroke-width="0.800"/><path d="M0-4.600l1.200 1.500h-2.400zM0 4.600l1.200-1.500h-2.400zM-4.600 0l1.500-1.200v2.400zM4.600 0l-1.500-1.200v2.400z" fill="#dcdcdc"/></g>
<g transform="translate(632.5 241.5)"><rect x="-2.800" y="-0.500" width="5.600" height="4.300" fill="#dcdcdc"/><path d="M-1.700-0.500v-1.500a1.700 1.700 0 0 1 3.400 0v1.500" fill="none" stroke="#dcdcdc" stroke-width="1"/></g>
</svg>
<div class="t" style="left:650px;top:236.500px">填充:</div>
<div class="a inp" style="left:668.500px;top:236.300px;width:19.500px;height:10.500px"></div><div class="t" style="left:670.500px;top:236.500px;font-size:6.1px">100%</div>
<div class="a btn" style="left:688.500px;top:236.300px;width:10.500px;height:10.500px"></div><svg class="a" style="left:692px;top:240.300px" width="4" height="3" viewBox="0 0 4 3"><path d="M0.200 0.300h3.600L2 2.700z" fill="#e0e0e0"/></svg>
<div class="a" style="left:567.500px;top:249.500px;width:133.500px;height:146px;background:#4a4a4a"></div>
<div class="a" style="left:694px;top:250px;width:7px;height:145px;background:#4f4f4f;border-left:1px solid #3a3a3a"></div>
<div class="a lrow lsel" style="top:250px"></div>
<div class="a leye" style="top:250px"></div>
<svg class="a" style="left:571.6px;top:258.0px" width="8.4" height="5.900" viewBox="0 0 10 7"><path d="M0.400 3.500C2 0.600 8 0.600 9.600 3.500 8 6.400 2 6.400 0.400 3.500z" fill="#cdcdcd"/><circle cx="5" cy="3.500" r="1.700" fill="#444"/><circle cx="5" cy="3.500" r="0.700" fill="#e6e6e6"/></svg>
<div class="t" style="left:605px;top:256.8px;">图层 2</div>
<div class="a lrow" style="top:272px"></div>
<div class="a leye" style="top:272px"></div>
<svg class="a" style="left:571.6px;top:280.0px" width="8.4" height="5.900" viewBox="0 0 10 7"><path d="M0.400 3.500C2 0.600 8 0.600 9.600 3.500 8 6.400 2 6.400 0.400 3.500z" fill="#cdcdcd"/><circle cx="5" cy="3.500" r="1.700" fill="#444"/><circle cx="5" cy="3.500" r="0.700" fill="#e6e6e6"/></svg>
<div class="t" style="left:605px;top:278.8px;">椭圆 1 拷贝 5</div>
<div class="a lrow" style="top:294px"></div>
<div class="a leye" style="top:294px"></div>
<svg class="a" style="left:571.6px;top:302.0px" width="8.4" height="5.900" viewBox="0 0 10 7"><path d="M0.400 3.500C2 0.600 8 0.600 9.600 3.500 8 6.400 2 6.400 0.400 3.500z" fill="#cdcdcd"/><circle cx="5" cy="3.500" r="1.700" fill="#444"/><circle cx="5" cy="3.500" r="0.700" fill="#e6e6e6"/></svg>
<div class="t" style="left:605px;top:300.8px;">椭圆 1 拷贝 4</div>
<div class="a lrow" style="top:316px"></div>
<div class="a leye" style="top:316px"></div>
<svg class="a" style="left:571.6px;top:324.0px" width="8.4" height="5.900" viewBox="0 0 10 7"><path d="M0.400 3.500C2 0.600 8 0.600 9.600 3.500 8 6.400 2 6.400 0.400 3.500z" fill="#cdcdcd"/><circle cx="5" cy="3.500" r="1.700" fill="#444"/><circle cx="5" cy="3.500" r="0.700" fill="#e6e6e6"/></svg>
<div class="t" style="left:605px;top:322.8px;">图层 1</div>
<div class="a lrow" style="top:338px"></div>
<div class="a leye" style="top:338px"></div>
<svg class="a" style="left:571.6px;top:346.0px" width="8.4" height="5.900" viewBox="0 0 10 7"><path d="M0.400 3.500C2 0.600 8 0.600 9.600 3.500 8 6.400 2 6.400 0.400 3.500z" fill="#cdcdcd"/><circle cx="5" cy="3.500" r="1.700" fill="#444"/><circle cx="5" cy="3.500" r="0.700" fill="#e6e6e6"/></svg>
<div class="t" style="left:605px;top:344.8px;font-style:italic;">背景</div>
<svg class="a" style="left:585px;top:250px" width="20" height="110" viewBox="585 250 20 110">
<defs><pattern id="chk" x="587" y="253" width="3" height="3" patternUnits="userSpaceOnUse"><rect width="3" height="3" fill="#fff"/><rect width="1.500" height="1.500" fill="#cfcfcf"/><rect x="1.500" y="1.500" width="1.500" height="1.500" fill="#cfcfcf"/></pattern></defs>
<rect x="587" y="252.3" width="13.400" height="17.500" fill="url(#chk)" stroke="#222" stroke-width="0.600"/>
<path d="M586 255.3v-3.500h3.500M598 251.8h3.500v3.500M601.500 266.8v3.500h-3.500M589.500 270.3h-3.500v-3.500" fill="none" stroke="#f0f0f0" stroke-width="0.800"/>
<rect x="587" y="274.3" width="13.400" height="17.500" fill="url(#chk)" stroke="#222" stroke-width="0.600"/>
<path d="M590.500 286.3a2.300 2.300 0 1 0 3-2.500M593.500 283.8l2.500-1.500" fill="none" stroke="#2a9be0" stroke-width="1.300"/>
<rect x="587" y="296.3" width="13.400" height="17.500" fill="url(#chk)" stroke="#222" stroke-width="0.600"/>
<path d="M596 302.8a2.600 2.600 0 1 0-3.500 2.500M592.500 305.3l-1.500 1.500" fill="none" stroke="#2a9be0" stroke-width="1.300"/>
<rect x="587" y="318.3" width="13.400" height="17.500" fill="#fccb87" stroke="#222" stroke-width="0.600"/>
<rect x="587" y="340.3" width="13.400" height="17.500" fill="#fff" stroke="#222" stroke-width="0.600"/>
</svg>
<svg class="a" style="left:678.300px;top:345.200px" width="6.200" height="7" viewBox="0 0 8 9"><rect x="1" y="3.800" width="6" height="4.700" fill="none" stroke="#dcdcdc" stroke-width="0.900"/><path d="M2.300 3.800v-1.300a1.700 1.700 0 0 1 3.400 0v1.300" fill="none" stroke="#dcdcdc" stroke-width="0.900"/><rect x="3.400" y="5.300" width="1.200" height="1.800" fill="#dcdcdc"/></svg>
<svg class="a" style="left:579px;top:362px" width="33" height="28" viewBox="0 0 33 28"><ellipse cx="12" cy="11" rx="10.500" ry="9" fill="#f2f2f2"/><path d="M5 17.500l-1.500 5 5.500-3z" fill="#f2f2f2"/><circle cx="8.300" cy="8" r="1.500" fill="#4a4a4a"/><circle cx="15.500" cy="8" r="1.500" fill="#4a4a4a"/><ellipse cx="21.500" cy="18" rx="9.300" ry="7.800" fill="#f2f2f2" stroke="#4a4a4a" stroke-width="1.200"/><path d="M26.500 24l1.500 3.500-5-2.200z" fill="#f2f2f2"/><circle cx="18.300" cy="15.500" r="1.300" fill="#4a4a4a"/><circle cx="24.500" cy="15.500" r="1.300" fill="#4a4a4a"/></svg>
<div class="t" id="wm">极微设计</div>
<div class="a" style="left:567.500px;top:394.500px;width:133.500px;height:11.500px;background:#535353;border-top:1px solid #3a3a3a"></div>
<svg class="a" style="left:585px;top:395px" width="110" height="11" viewBox="585 395 110 11">
<g transform="translate(591.5 400.5)"><rect x="-3.500" y="-1.300" width="3.600" height="2.600" rx="1.300" fill="none" stroke="#a8a8a8" stroke-width="0.800"/><rect x="-0.100" y="-1.300" width="3.600" height="2.600" rx="1.300" fill="none" stroke="#a8a8a8" stroke-width="0.800"/></g>
<text x="603.500" y="403" font-family="Liberation Serif, serif" font-style="italic" font-size="8" fill="#dcdcdc">fx</text><path d="M611.500 403.800h1.800l-0.900 1.200z" fill="#dcdcdc"/>
<g transform="translate(623 400.5)"><rect x="-3.800" y="-2.800" width="7.600" height="5.600" fill="#dcdcdc"/><circle r="1.700" fill="#444"/></g>
<g transform="translate(638 400.5)"><circle r="3.200" fill="none" stroke="#dcdcdc" stroke-width="0.900"/><path d="M-2.300 2.300A3.200 3.200 0 0 1 2.300-2.300z" fill="#dcdcdc"/><path d="M3.800 3.300h1.800l-0.900 1.200z" fill="#dcdcdc"/></g>
<g transform="translate(653 400.5)"><path d="M-3.800-3h3l0.800 1h3.800v5h-7.600z" fill="#dcdcdc"/></g>
<g transform="translate(667.5 400.5)"><path d="M-3.300-3.300h6.600v6.600h-4.300l-2.300-2.300z" fill="#dcdcdc"/><path d="M-3.300 1l2.300 2.300v-2.300z" fill="#666"/></g>
<g transform="translate(682 400.5)"><path d="M-3-1.800h6l-0.600 5.300h-4.800z" fill="#dcdcdc"/><path d="M-3.600-2.600h7.200M-1.200-3.500h2.400" stroke="#dcdcdc" stroke-width="0.900"/><path d="M-1.200-0.500v3M1.200-0.500v3" stroke="#555" stroke-width="0.600"/></g>
</svg>
<div class="a" id="rightedge"></div>
<div class="a" id="bottomstrip"></div>
<div class="a" style="left:0;top:0;width:705px;height:1px;background:#3c3c3c"></div>
</body>
</html>
